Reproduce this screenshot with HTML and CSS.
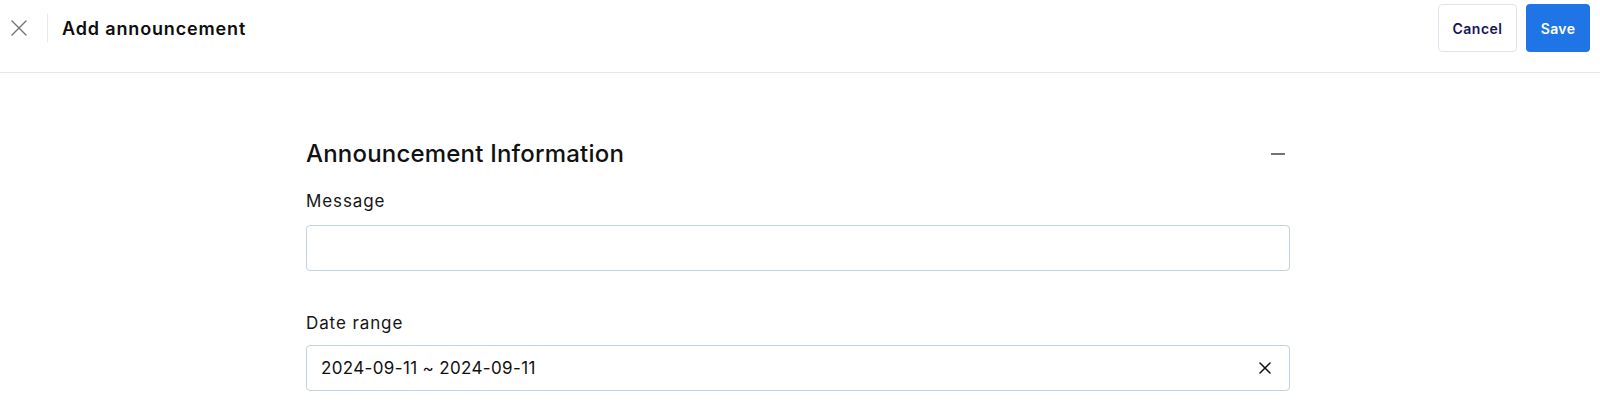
FILE: index.html
```html
<!DOCTYPE html>
<html lang="en">
<head>
<meta charset="utf-8">
<title>Add announcement</title>
<link rel="stylesheet" href="styles.css">
</head>
<body>
<header class="topbar">
  <div class="topbar-left">
    <button class="icon-btn close-btn" aria-label="Close">
      <svg width="16" height="16" viewBox="0 0 16 16"><path d="M1 1 L15 15 M15 1 L1 15" stroke="currentColor" stroke-width="1.4" stroke-linecap="round" fill="none"/></svg>
    </button>
    <span class="divider"></span>
    <h1 class="page-title">Add announcement</h1>
  </div>
  <div class="topbar-actions">
    <button class="btn btn-secondary">Cancel</button>
    <button class="btn btn-primary">Save</button>
  </div>
</header>
<main class="content">
  <section class="panel">
    <div class="panel-head">
      <h2 class="panel-title">Announcement Information</h2>
      <button class="icon-btn collapse-btn" aria-label="Collapse">
        <svg width="14" height="4" viewBox="0 0 14 4"><rect x="0" y="1" width="14" height="2" fill="currentColor"/></svg>
      </button>
    </div>
    <div class="field">
      <label class="field-label">Message</label>
      <div class="input"></div>
    </div>
    <div class="field field-date">
      <label class="field-label">Date range</label>
      <div class="input input-date">
        <span class="input-value">2024-09-11 ~ 2024-09-11</span>
        <svg class="clear-icon" width="12" height="12" viewBox="0 0 12 12"><path d="M1 1 L11 11 M11 1 L1 11" stroke="currentColor" stroke-width="1.5" stroke-linecap="round" fill="none"/></svg>
      </div>
    </div>
  </section>
</main>
</body>
</html>
```
FILE: styles.css
```css
* { box-sizing: border-box; }
html, body {
  margin: 0;
  padding: 0;
  background: #ffffff;
  font-family: "Inter", "Noto Sans", Arial, sans-serif;
  color: #111111;
}
button {
  font-family: inherit;
  border: none;
  background: none;
  padding: 0;
  cursor: pointer;
}
.topbar {
  display: flex;
  justify-content: space-between;
  align-items: center;
  padding: 4px 10px 20px 11px;
  border-bottom: 1px solid #e6e7ea;
  height: 73px;
}
.topbar-left {
  display: flex;
  align-items: center;
  height: 48px;
}
.close-btn {
  color: #6e737c;
  width: 16px;
  height: 16px;
  display: flex;
}
.divider {
  width: 1px;
  height: 28px;
  background: #e8e9ec;
  margin: 0 14px 0 20px;
}
.page-title {
  margin: 0;
  font-size: 18px;
  font-weight: 600;
  letter-spacing: 0.85px;
  color: #0d0d0d;
}
.topbar-actions {
  display: flex;
  gap: 9px;
}
.btn {
  height: 48px;
  border-radius: 4px;
  font-size: 14px;
  font-weight: 600;
}
.btn-secondary {
  width: 79px;
  background: #ffffff;
  border: 1px solid #e3e3ee;
  color: #14145a;
  letter-spacing: 0.5px;
}
.btn-primary {
  width: 64px;
  background: #1f75e6;
  color: #ffffff;
  letter-spacing: 0.4px;
}
.content {
  padding-top: 65px;
}
.panel {
  width: 984px;
  margin-left: calc(50% - 494px);
}
.panel-head {
  display: flex;
  justify-content: space-between;
  align-items: center;
  height: 32px;
  margin-bottom: 19px;
}
.panel-title {
  margin: 0;
  font-size: 24px;
  font-weight: 500;
  letter-spacing: 0.2px;
  line-height: 32px;
  color: #111111;
}
.collapse-btn {
  color: #6e737c;
  display: flex;
  margin-right: 5px;
}
.field-label {
  display: block;
  font-size: 17px;
  letter-spacing: 0.9px;
  line-height: 24px;
  color: #151515;
  margin-bottom: 12px;
}
.field-date {
  margin-top: 40px;
}
.field-date .field-label {
  margin-bottom: 10px;
}
.input {
  height: 46px;
  border: 1px solid #c3d1e1;
  border-radius: 4px;
  background: #ffffff;
}
.input-date {
  display: flex;
  align-items: center;
  justify-content: space-between;
  padding: 0 18px 0 14px;
}
.input-value {
  font-size: 17px;
  letter-spacing: 0.35px;
  color: #111111;
}
.clear-icon {
  color: #111111;
}
```
